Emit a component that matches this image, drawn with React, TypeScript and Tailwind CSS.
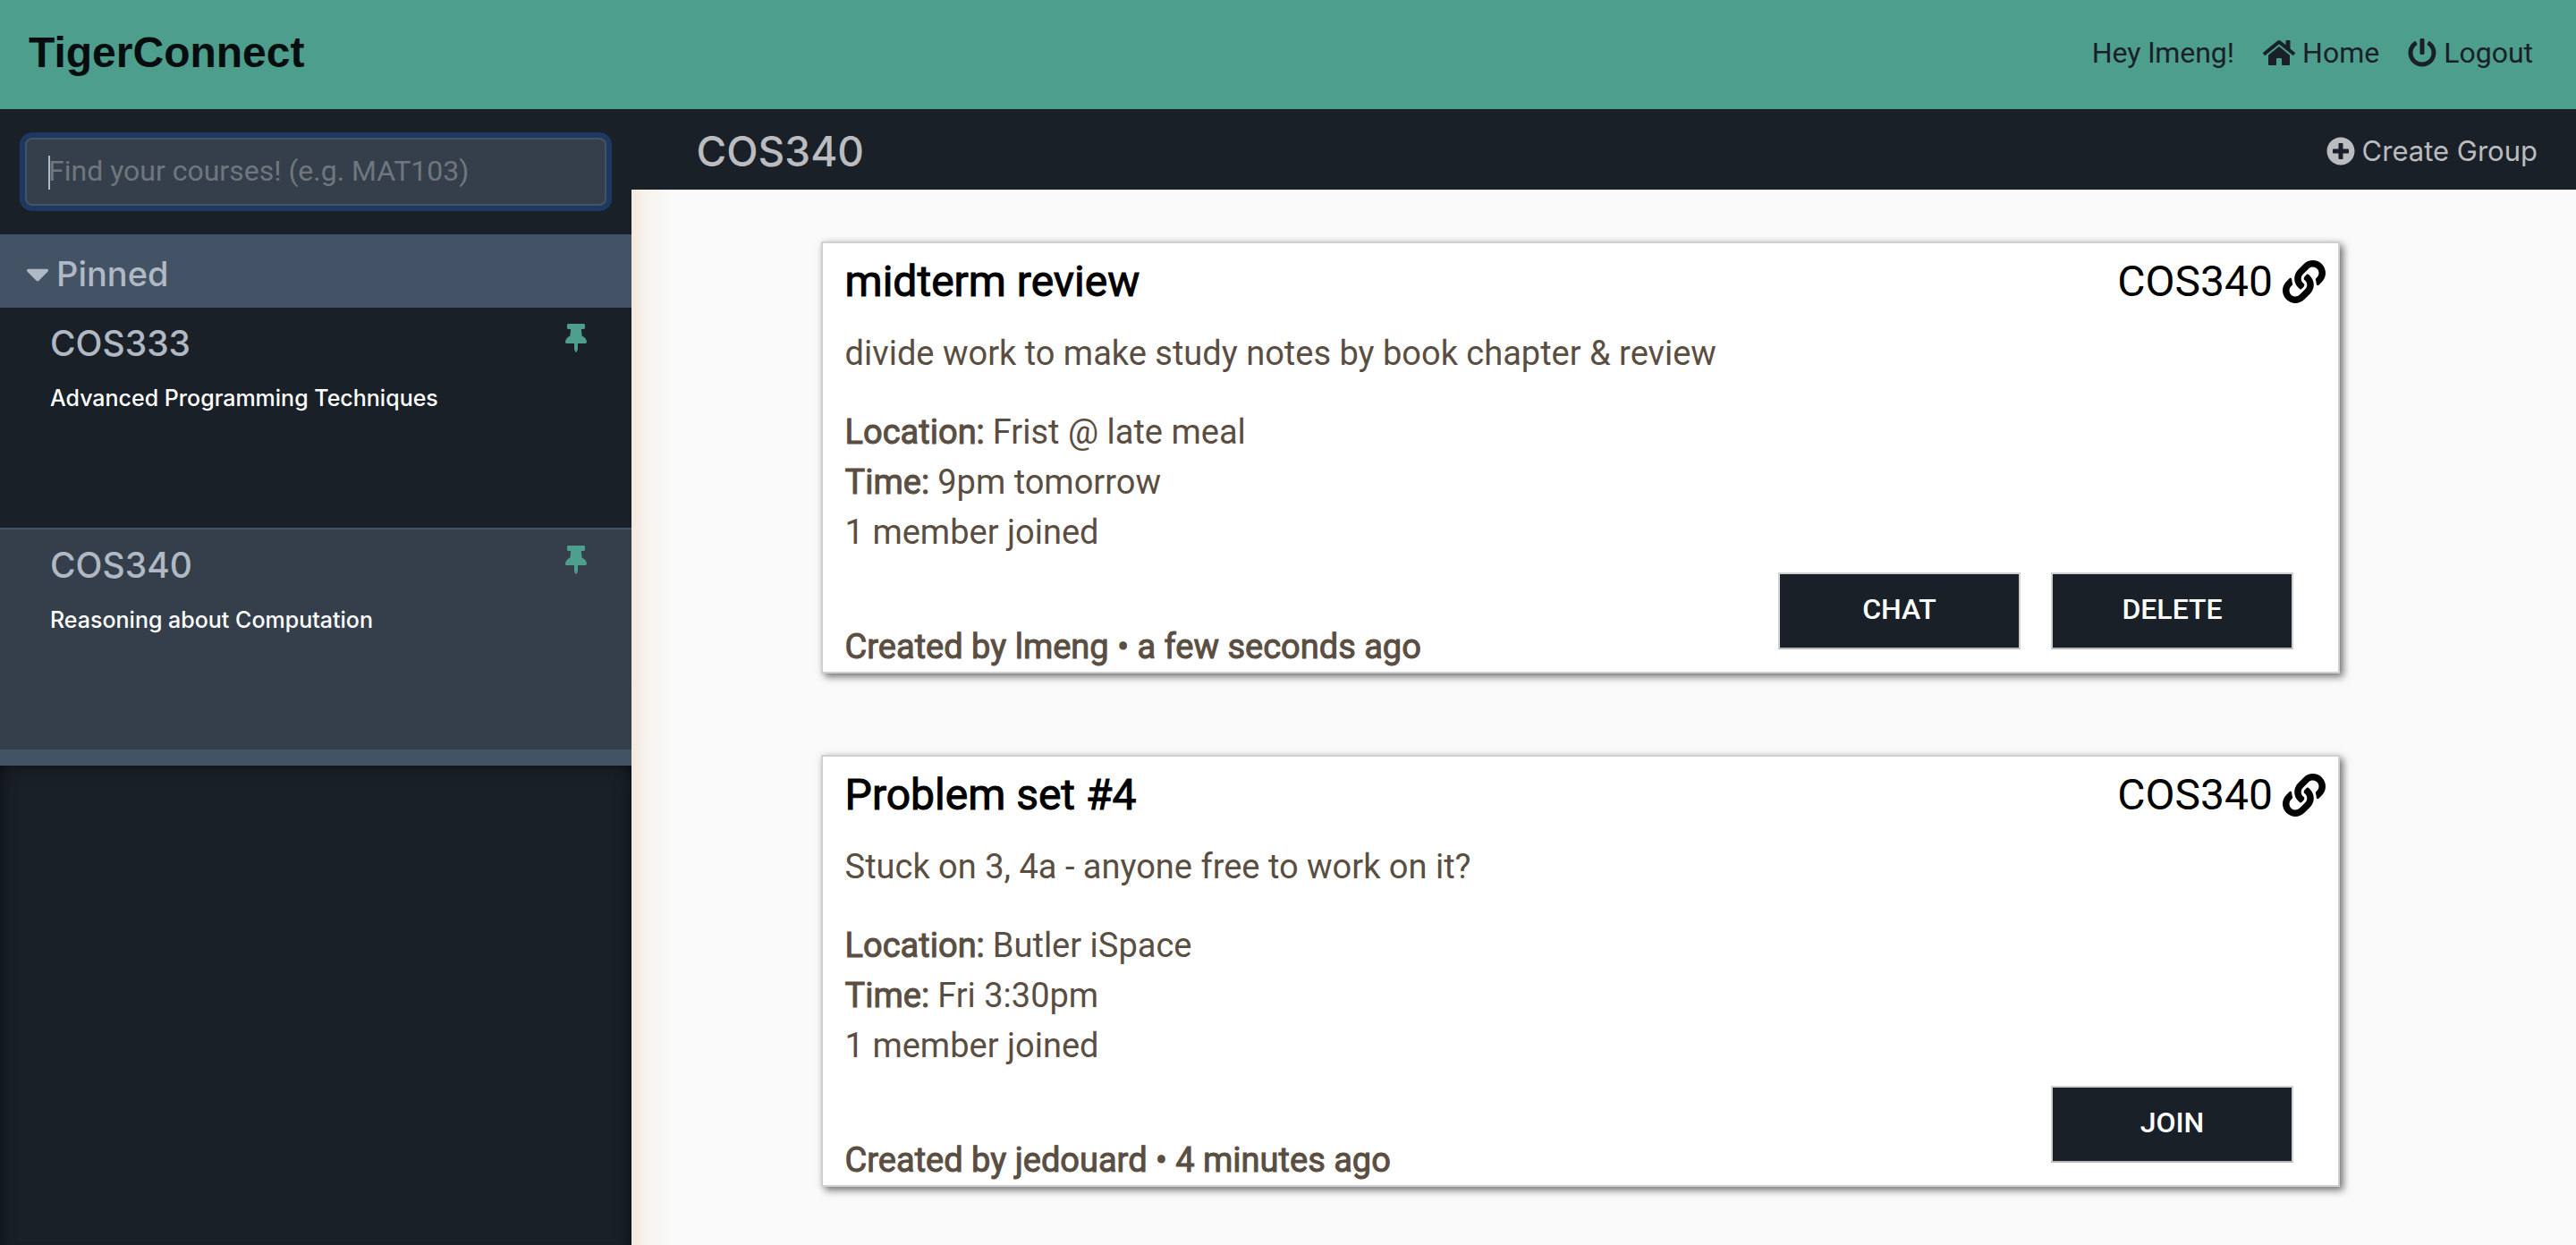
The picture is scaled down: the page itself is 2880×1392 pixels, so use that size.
import { FaCaretDown, FaHome, FaLink, FaPlusCircle, FaPowerOff, FaThumbtack } from 'react-icons/fa';

type Course = { code: string; name: string; selected?: boolean };
type Group = {
  title: string;
  course: string;
  description: string;
  location: string;
  time: string;
  members: string;
  author: string;
  age: string;
  actions: string[];
};

const courses: Course[] = [
  { code: 'COS333', name: 'Advanced Programming Techniques' },
  { code: 'COS340', name: 'Reasoning about Computation', selected: true },
];

const groups: Group[] = [
  {
    title: 'midterm review',
    course: 'COS340',
    description: 'divide work to make study notes by book chapter & review',
    location: 'Frist @ late meal',
    time: '9pm tomorrow',
    members: '1 member joined',
    author: 'lmeng',
    age: 'a few seconds ago',
    actions: ['CHAT', 'DELETE'],
  },
  {
    title: 'Problem set #4',
    course: 'COS340',
    description: 'Stuck on 3, 4a - anyone free to work on it?',
    location: 'Butler iSpace',
    time: 'Fri 3:30pm',
    members: '1 member joined',
    author: 'jedouard',
    age: '4 minutes ago',
    actions: ['JOIN'],
  },
];

function NavBar() {
  return (
    <header className="flex h-[122px] items-center justify-between bg-[#4d9e8c] pr-12 pb-1 pl-8">
      <a href="#" className="font-['Liberation_Sans',sans-serif] text-[48px] font-bold text-[#060d0f]">
        TigerConnect
      </a>
      <nav className="flex items-center gap-8 text-[32px] text-[#1a2028]">
        <span>Hey lmeng!</span>
        <a href="#home" className="flex items-center gap-2">
          <FaHome className="h-8 w-9" />
          Home
        </a>
        <a href="#logout" className="flex items-center gap-2">
          <FaPowerOff className="size-8" />
          Logout
        </a>
      </nav>
    </header>
  );
}

function CourseItem({ course }: { course: Course }) {
  return (
    <li
      className={
        course.selected
          ? 'flex h-[248px] items-start justify-between border-t-2 border-[#435465] bg-[#343f4b] pr-[50px] pl-14'
          : 'flex h-[246px] items-start justify-between pr-[50px] pl-14'
      }
    >
      <div className="pt-4 font-[Inter,sans-serif] font-medium">
        <h3 className="text-[39px] leading-[48px] text-[#b0b9c3]">{course.code}</h3>
        <p className="mt-[21px] text-[25px] leading-8 text-white">{course.name}</p>
      </div>
      <button type="button" aria-label={`Unpin ${course.code}`} className="mt-[18px] text-[#4d9e8c]">
        <FaThumbtack className="h-8 w-6" />
      </button>
    </li>
  );
}

function Sidebar() {
  return (
    <aside className="flex w-[24.5%] shrink-0 flex-col bg-[#1a2028]">
      <div className="px-7 py-8">
        <div className="relative">
          <input
            type="text"
            aria-label="Find your courses"
            placeholder="Find your courses! (e.g. MAT103)"
            className="block h-[76px] w-full rounded-lg border-2 border-[#435465] bg-[#343f4b] px-6 pb-0.5 text-[32px] text-white ring-[6px] ring-[#1e385f] outline-none placeholder:text-[#6f767d]"
          />
          <span aria-hidden="true" className="absolute top-5 left-[26px] h-[38px] w-0.5 bg-[#b0b9c3]" />
        </div>
      </div>
      <button
        type="button"
        className="flex h-[82px] items-center gap-2 bg-[#435365] pt-1.5 pl-[29px] font-[Inter,sans-serif] text-[38px] font-medium text-[#b0b9c3]"
      >
        <FaCaretDown className="h-[42px] w-[26px]" />
        Pinned
      </button>
      <ul className="border-b-[18px] border-[#425464]">
        {courses.map((course) => (
          <CourseItem key={course.code} course={course} />
        ))}
      </ul>
      <div className="flex-1 shadow-[inset_0_16px_20px_-12px_rgba(0,0,0,0.3),inset_16px_0_16px_-14px_rgba(0,0,0,0.4),inset_-16px_0_16px_-14px_rgba(0,0,0,0.4)]" />
    </aside>
  );
}

function GroupCard({ group }: { group: Group }) {
  return (
    <article className="flex justify-between border-2 border-[#d0d0d0] bg-white pl-[25px] shadow-[4px_4px_8px_rgba(0,0,0,0.5),0_0_8px_rgba(0,0,0,0.08)]">
      <div className="pt-3.5 text-[38px] leading-[56px] text-[#5a4e42]">
        <h2 className="text-[48px] leading-[58px] text-black [-webkit-text-stroke:1px]">{group.title}</h2>
        <p className="mt-[23px]">{group.description}</p>
        <dl className="mt-8">
          <div className="flex gap-[9px]">
            <dt className="[-webkit-text-stroke:1px]">Location:</dt>
            <dd>{group.location}</dd>
          </div>
          <div className="flex gap-[9px]">
            <dt className="[-webkit-text-stroke:1px]">Time:</dt>
            <dd>{group.time}</dd>
          </div>
        </dl>
        <p>{group.members}</p>
        <p className="mt-18 [-webkit-text-stroke:1px]">
          Created by {group.author} • {group.age}
        </p>
      </div>
      <div className="flex flex-col items-end justify-between pt-3.5 pb-[25px]">
        <a href="#group" className="flex items-center gap-[11px] pr-3.5 text-[48px] leading-[58px] text-black">
          {group.course}
          <FaLink className="size-12" />
        </a>
        <div className="flex gap-[34px] pr-[50px]">
          {group.actions.map((action) => (
            <button
              key={action}
              type="button"
              className="h-[86px] w-[271px] border-2 border-[#d0d0d0] border-b-[#b8b8b8] bg-[#1a2028] pb-1 text-[32px] font-medium text-white"
            >
              {action}
            </button>
          ))}
        </div>
      </div>
    </article>
  );
}

export default function App() {
  return (
    <div className="flex min-h-screen flex-col bg-[#fafafa] font-[Roboto,sans-serif]">
      <NavBar />
      <div className="flex flex-1">
        <Sidebar />
        <main className="flex flex-1 flex-col">
          <div className="flex h-[90px] items-center justify-between bg-[#1a2028] pt-1 pr-[43px] pl-[73px] font-[Inter,sans-serif] text-[#babcbf]">
            <h1 className="text-[46px] font-medium">COS340</h1>
            <button type="button" className="flex items-center gap-2 text-[31px]">
              <FaPlusCircle className="size-8" />
              Create Group
            </button>
          </div>
          <div className="flex flex-1 flex-col gap-[91px] bg-[linear-gradient(to_right,#f3e8dc,#f7f4ef_18px,#fafafa_44px)] pt-[58px] pr-[264px] pb-16 pl-[212px]">
            {groups.map((group) => (
              <GroupCard key={group.title} group={group} />
            ))}
          </div>
        </main>
      </div>
    </div>
  );
}
